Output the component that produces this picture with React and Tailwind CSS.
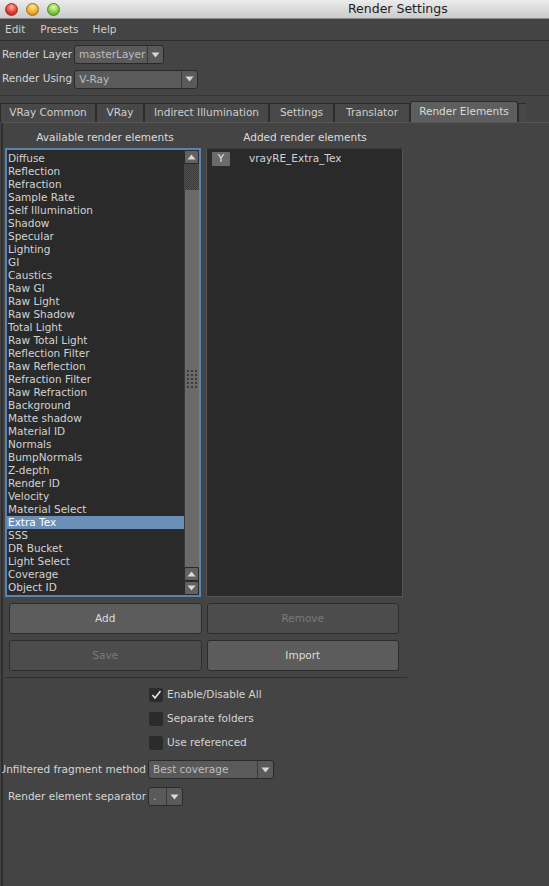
import React from 'react';

const font = { fontFamily: '"DejaVu Sans", "Lucida Grande", sans-serif' };

const elements = [
  'Diffuse', 'Reflection', 'Refraction', 'Sample Rate', 'Self Illumination', 'Shadow',
  'Specular', 'Lighting', 'GI', 'Caustics', 'Raw GI', 'Raw Light', 'Raw Shadow',
  'Total Light', 'Raw Total Light', 'Reflection Filter', 'Raw Reflection', 'Refraction Filter',
  'Raw Refraction', 'Background', 'Matte shadow', 'Material ID', 'Normals', 'BumpNormals',
  'Z-depth', 'Render ID', 'Velocity', 'Material Select', 'Extra Tex', 'SSS', 'DR Bucket',
  'Light Select', 'Coverage', 'Object ID'
];

const tabs = ['VRay Common', 'VRay', 'Indirect Illumination', 'Settings', 'Translator'];
const tabWidths = ['w-[96px]', 'w-[48px]', 'w-[125px]', 'w-[65px]', 'w-[76px]'];

const Arrow = ({ up }) => (
  <svg width="9" height="6" viewBox="0 0 9 6">
    <path d={up ? 'M0.5 5.5 L4.5 0.5 L8.5 5.5 Z' : 'M0.5 0.5 L4.5 5.5 L8.5 0.5 Z'} fill="#d8d8d8" />
  </svg>
);

const Dropdown = ({ value, width, arrowW = 'w-[16px]' }) => (
  <div className={`flex h-[19px] ${width} rounded-[3px] border border-[#2a2a2a] bg-[#5a5a5a]`}>
    <div className="flex-1 truncate pl-[4px] text-[10.5px] leading-[17px] text-[#bdbdbd]">{value}</div>
    <div className={`flex ${arrowW} items-center justify-center border-l border-[#3a3a3a]`}>
      <Arrow />
    </div>
  </div>
);

const Button = ({ label, disabled }) => (
  <div
    className={`flex h-[31px] items-center justify-center rounded-[3px] border border-[#2c2c2c] text-[10.5px] ${
      disabled ? 'bg-[#4c4c4c] text-[#7a7a7a]' : 'bg-[#5c5c5c] text-[#dcdcdc]'
    }`}
  >
    {label}
  </div>
);

const Check = ({ checked, label }) => (
  <div className="flex h-[24px] items-center pl-[147px]">
    <div className="flex h-[14px] w-[14px] items-center justify-center rounded-[2px] bg-[#2b2b2b]">
      {checked && (
        <svg width="11" height="10" viewBox="0 0 11 10">
          <path d="M1.5 5 L4 8 L9.5 1" stroke="#e8e8e8" strokeWidth="1.6" fill="none" />
        </svg>
      )}
    </div>
    <span className="ml-[4px] text-[10.5px] text-[#d4d4d4]">{label}</span>
  </div>
);

export default function App() {
  return (
    <div className="h-[886px] w-[549px] overflow-hidden bg-[#444444] select-none" style={font}>
      {/* title bar */}
      <div className="flex h-[19px] items-center border-b border-[#8a8a8a] bg-[linear-gradient(#ececec,#cbcbcb)]">
        <div className="ml-[5px] flex gap-[8px]">
          <span className="h-[13px] w-[13px] rounded-full border border-[#a03030] bg-[radial-gradient(circle_at_50%_30%,#ffb0a8,#e0342c_60%,#a01810)]" />
          <span className="h-[13px] w-[13px] rounded-full border border-[#a07020] bg-[radial-gradient(circle_at_50%_30%,#ffe8a0,#f0a820_60%,#b06c08)]" />
          <span className="h-[13px] w-[13px] rounded-full border border-[#4c8a20] bg-[radial-gradient(circle_at_50%_30%,#e0ffb0,#80c440_60%,#4c8c18)]" />
        </div>
        <div className="ml-[288px] text-[12.5px] text-[#222]">Render Settings</div>
      </div>

      {/* menu bar */}
      <div className="flex h-[22px] items-center border-b border-[#2e2e2e] pt-[1px] text-[10.5px] text-[#cfcfcf]">
        <span className="ml-[5px]">Edit</span>
        <span className="ml-[15px]">Presets</span>
        <span className="ml-[14px]">Help</span>
      </div>

      {/* render layer / using */}
      <div className="flex h-[25px] items-center pt-[2px] text-[10.5px] text-[#d6d6d6]">
        <span className="ml-[2px] mr-[2px]">Render Layer</span>
        <Dropdown value="masterLayer" width="w-[90px]" />
      </div>
      <div className="flex h-[26px] items-center text-[10.5px] text-[#d6d6d6]">
        <span className="ml-[2px] mr-[2px]">Render Using</span>
        <Dropdown value="V-Ray" width="w-[124px]" />
      </div>
      <div className="mt-[3px] h-px w-full bg-[#363636]" />

      {/* tabs */}
      <div className="mt-[5px] flex h-[21px] items-end">
        {tabs.map((t, i) => (
          <div
            key={t}
            className={`flex h-[19px] ${tabWidths[i]} items-center justify-center border border-b-0 border-[#2c2c2c] bg-[#484848] text-[10.5px] text-[#cfcfcf]`}
          >
            {t}
          </div>
        ))}
        <div className="flex h-[21px] w-[108px] items-center justify-center rounded-t-[3px] border border-b-0 border-[#2c2c2c] bg-[#5e5e5e] text-[10.5px] text-[#dadada]">
          Render Elements
        </div>
        <div className="h-[19px] w-[8px] border-l border-t border-[#2c2c2c] bg-[#484848]" />
      </div>

      {/* panel */}
      <div className="ml-[1px] h-[800px] border-l-2 border-t border-l-[#2e2e2e] border-t-[#565656] pl-[2px]">
        <div className="flex h-[24px] items-end text-[10.5px] text-[#dcdcdc]">
          <div className="w-[200px] pb-[1px] text-center">Available render elements</div>
          <div className="w-[200px] pb-[1px] text-center">Added render elements</div>
        </div>

        <div className="mt-[1px] flex h-[449px] gap-[5px]">
          {/* available list */}
          <div className="flex w-[196px] border-2 border-[#5a84b0] bg-[#2a2a2a]">
            <div className="flex-1 pt-[2px]">
              {elements.map((e) => (
                <div
                  key={e}
                  className={`h-[13px] pl-[1px] text-[10.5px] leading-[13px] ${
                    e === 'Extra Tex' ? 'bg-[#6b8fb6] text-white' : 'text-[#d2d2d2]'
                  }`}
                >
                  {e}
                </div>
              ))}
            </div>
            <div className="flex w-[15px] flex-col bg-[#3a3a3a]">
              <div className="flex h-[14px] items-center justify-center rounded-[2px] border border-[#2a2a2a] bg-[#626262]">
                <Arrow up />
              </div>
              <div className="h-[26px] bg-[repeating-conic-gradient(#505050_0_25%,#3c3c3c_0_50%)] bg-[length:2px_2px]" />
              <div className="flex flex-1 items-center justify-center border-l border-[#3a3a3a] bg-[#6a6a6a]">
                <div className="grid grid-cols-3 gap-[2px]">
                  {Array.from({ length: 15 }).map((_, i) => (
                    <span key={i} className="h-[2px] w-[2px] bg-[#3a3a3a]" />
                  ))}
                </div>
              </div>
              <div className="flex h-[14px] items-center justify-center rounded-[2px] border border-[#2a2a2a] bg-[#626262]">
                <Arrow up />
              </div>
              <div className="flex h-[14px] items-center justify-center rounded-[2px] border border-[#2a2a2a] bg-[#626262]">
                <Arrow />
              </div>
            </div>
          </div>

          {/* added list */}
          <div className="w-[197px] border border-[#555] border-t-[#3a3a3a] bg-[#2a2a2a] pl-[4px] pt-[2px]">
            <div className="flex items-center">
              <div className="flex h-[16px] w-[20px] items-center justify-center rounded-[2px] border border-[#2c2c2c] bg-[#6a6a6a] text-[10.5px] text-[#e6e6e6]">
                Y
              </div>
              <span className="ml-[18px] text-[10.5px] text-[#d2d2d2]">vrayRE_Extra_Tex</span>
            </div>
          </div>
        </div>

        {/* buttons */}
        <div className="ml-[4px] mt-[6px] grid w-[390px] grid-cols-2 gap-x-[5px] gap-y-[6px]">
          <Button label="Add" />
          <Button label="Remove" disabled />
          <Button label="Save" disabled />
          <Button label="Import" />
        </div>
        <div className="mt-[6px] h-px w-[402px] bg-[#2e2e2e]" />

        {/* options */}
        <div className="mt-[5px] ml-[-3px]">
          <Check checked label="Enable/Disable All" />
          <Check label="Separate folders" />
          <Check label="Use referenced" />
          <div className="mt-[3px] flex h-[23px] items-center">
            <div className="flex w-[146px] justify-end overflow-hidden whitespace-nowrap pr-[2px] text-[10.5px] text-[#d6d6d6]">
              Unfiltered fragment method
            </div>
            <Dropdown value="Best coverage" width="w-[126px]" arrowW="w-[16px]" />
          </div>
          <div className="mt-[4px] flex h-[23px] items-center">
            <div className="flex w-[146px] justify-end overflow-hidden whitespace-nowrap pr-[2px] text-[10.5px] text-[#d6d6d6]">
              Render element separator
            </div>
            <Dropdown value="." width="w-[35px]" arrowW="w-[16px]" />
          </div>
        </div>
      </div>
    </div>
  );
}
